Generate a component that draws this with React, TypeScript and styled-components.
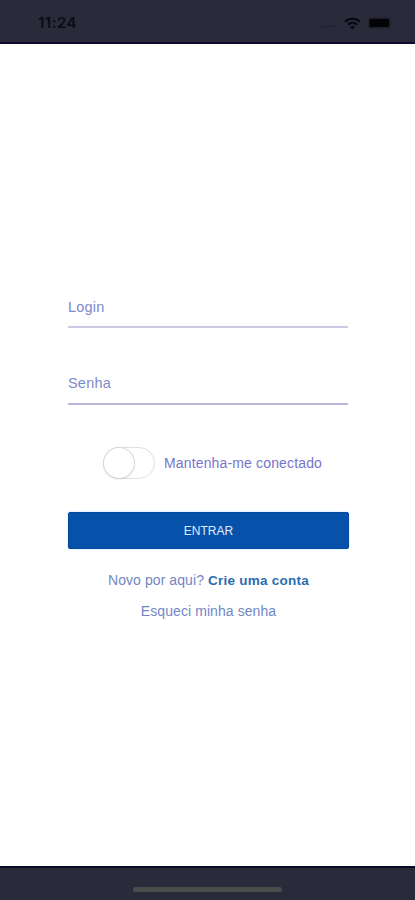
import React, { useState } from 'react';
import styled, { createGlobalStyle } from 'styled-components';

const GlobalStyle = createGlobalStyle`
  * { box-sizing: border-box; }
  body { margin: 0; background: #fff; font-family: "Liberation Sans", Arial, sans-serif; }
`;

const Screen = styled.div`
  width: 415px;
  height: 900px;
  display: flex;
  flex-direction: column;
  overflow: hidden;
  background: #fff;
`;

const StatusBar = styled.header`
  flex: none;
  height: 44px;
  padding: 4px 22px 0 38px;
  display: flex;
  align-items: center;
  justify-content: space-between;
  background: #292a3a;
  border-bottom: 2px solid #0e0a2b;
`;

const Clock = styled.span`
  font: 600 15px/20px Inter, sans-serif;
  letter-spacing: 0.5px;
  color: #0b0b16;
`;

const StatusIcons = styled.div`
  display: flex;
  align-items: center;
  gap: 7px;
`;

const Form = styled.main`
  flex: 1;
  padding: 250px 66px 0 68px;
  display: flex;
  flex-direction: column;
`;

const Field = styled.input`
  display: block;
  width: 280px;
  height: 34px;
  margin: 0 0 42px;
  padding: 0 0 6px;
  border: 0;
  border-bottom: 2px solid #cbc9e4;
  border-radius: 0;
  outline: 0;
  background: transparent;
  font: 14.5px/20px "Liberation Sans", Arial, sans-serif;
  letter-spacing: 0.2px;
  color: #7080c4;
  &::placeholder { color: #7d8aca; opacity: 1; }
`;

const Password = styled(Field)`
  height: 35px;
  padding-bottom: 7px;
  border-bottom-color: #b9b6da;
`;

const Remember = styled.div`
  display: flex;
  align-items: center;
  gap: 9px;
  margin-left: 35px;
  height: 32px;
`;

const Track = styled.button<{ $on: boolean }>`
  display: flex;
  justify-content: ${({ $on }) => ($on ? 'flex-end' : 'flex-start')};
  width: 52px;
  height: 32px;
  padding: 0;
  border: 1px solid #dfdfdb;
  border-radius: 16px;
  background: ${({ $on }) => ($on ? '#0652aa' : '#fff')};
`;

const Thumb = styled.span`
  width: 30px;
  height: 30px;
  border-radius: 50%;
  background: #fff;
  box-shadow: 0 0 0 1px #d9d9d6, 0 1px 3px rgba(0, 0, 0, 0.16);
`;

const RememberLabel = styled.span`
  font-size: 14px;
  line-height: 20px;
  letter-spacing: 0.15px;
  white-space: nowrap;
  color: #7874ca;
`;

const Submit = styled.button`
  width: 281px;
  height: 37px;
  margin-top: 33px;
  padding: 1px 0 0;
  border: 1px solid #034a9e;
  border-radius: 2px;
  background: #0652aa;
  box-shadow: 0 0 2px #a8d6ff;
  font: 12px/20px "Liberation Sans", Arial, sans-serif;
  color: #e2eaff;
`;

const LinkLine = styled.div<{ $gap: number }>`
  margin-top: ${({ $gap }) => $gap}px;
  line-height: 20px;
  font-size: 14px;
  letter-spacing: 0.08px;
  text-align: center;
  white-space: nowrap;
  color: #7386c4;
`;

const SignUp = styled.strong`
  font-size: 13.5px;
  letter-spacing: 0.25px;
  color: #2c6db0;
`;

const HomeBar = styled.footer`
  flex: none;
  height: 34px;
  padding-top: 19px;
  display: flex;
  justify-content: center;
  background: #292a3a;
  border-top: 2px solid #0c0827;
`;

const HomeIndicator = styled.span`
  width: 149px;
  height: 5px;
  border-radius: 3px;
  background: #4b4d4d;
`;

const SignalIcon = () => (
  <svg width="17" height="12" viewBox="0 0 17 12" fill="#1f202f">
    <rect x="1" y="9" width="2.5" height="1.5" />
    <rect x="5" y="9" width="2.5" height="1.5" />
    <rect x="9" y="8.5" width="2.5" height="1.5" />
    <rect x="13" y="8.5" width="2.5" height="1.5" />
  </svg>
);

const WifiIcon = () => (
  <svg width="17" height="13" viewBox="0 0 17 13" fill="none" stroke="#080813" strokeWidth="2">
    <path d="M1 4.8C5.2 .6 11.8 .6 16 4.8" />
    <path d="M3.9 7.8C6.5 5.2 10.5 5.2 13.1 7.8" />
    <path d="M6.1 9.9C7.5 8.6 9.5 8.6 10.9 9.9L8.5 12.4Z" fill="#080813" stroke="none" />
  </svg>
);

const BatteryIcon = () => (
  <svg width="25" height="12" viewBox="0 0 25 12">
    <rect x=".5" y=".5" width="22" height="11" rx="2.5" fill="#20212d" stroke="#222330" />
    <rect x="1.5" y="2" width="19.5" height="8" rx="1" fill="#030306" />
    <path d="M24 4v4" stroke="#222330" />
  </svg>
);

export default function App() {
  const [remember, setRemember] = useState(false);
  return (
    <>
      <GlobalStyle />
      <Screen>
        <StatusBar>
          <Clock>11:24</Clock>
          <StatusIcons>
            <SignalIcon />
            <WifiIcon />
            <BatteryIcon />
          </StatusIcons>
        </StatusBar>
        <Form>
          <Field placeholder="Login" />
          <Password type="password" placeholder="Senha" />
          <Remember>
            <Track $on={remember} aria-label="Mantenha-me conectado" onClick={() => setRemember(!remember)}>
              <Thumb />
            </Track>
            <RememberLabel>Mantenha-me conectado</RememberLabel>
          </Remember>
          <Submit>ENTRAR</Submit>
          <LinkLine $gap={21}>
            Novo por aqui? <SignUp>Crie uma conta</SignUp>
          </LinkLine>
          <LinkLine $gap={10}>Esqueci minha senha</LinkLine>
        </Form>
        <HomeBar>
          <HomeIndicator />
        </HomeBar>
      </Screen>
    </>
  );
}
